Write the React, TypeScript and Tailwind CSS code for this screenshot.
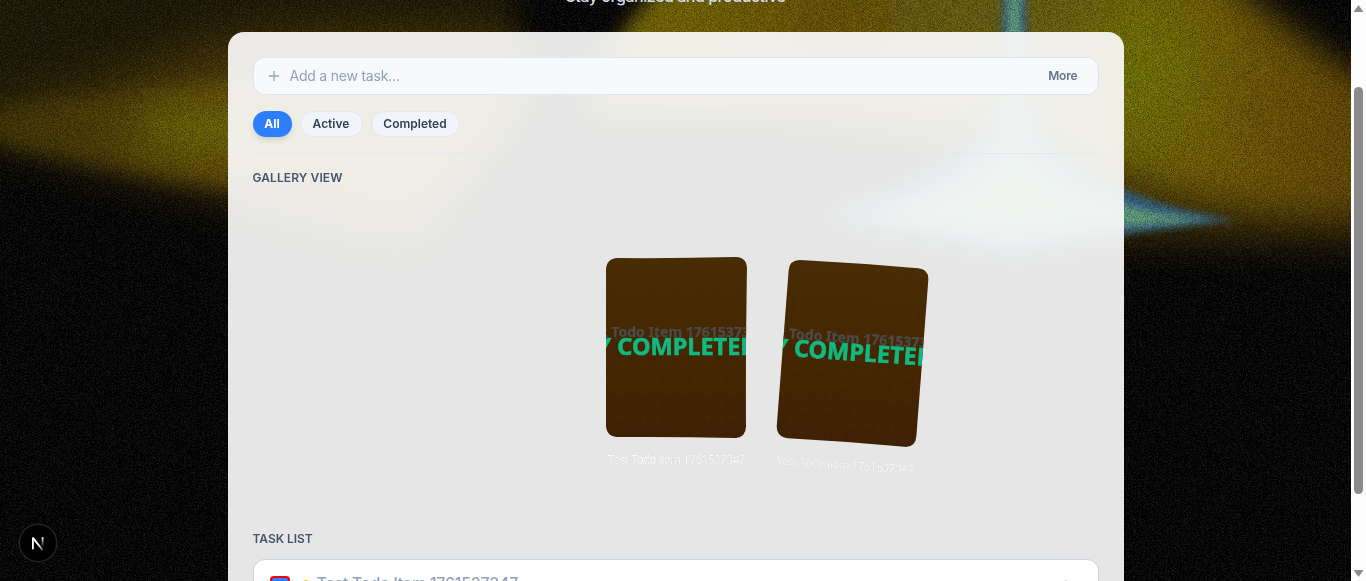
import { Plus } from "lucide-react";

function Backdrop() {
  return (
    <svg className="absolute inset-0" width="1351" height="581" viewBox="0 0 1351 581" aria-hidden="true">
      <defs>
        <filter id="b3" x="-30%" y="-30%" width="160%" height="160%"><feGaussianBlur stdDeviation="3.5" /></filter>
        <filter id="b9" x="-30%" y="-30%" width="160%" height="160%"><feGaussianBlur stdDeviation="9" /></filter>
        <filter id="b16" x="-30%" y="-30%" width="160%" height="160%"><feGaussianBlur stdDeviation="17" /></filter>
        <filter id="b20" x="-50%" y="-80%" width="200%" height="260%"><feGaussianBlur stdDeviation="20" /></filter>
        <filter id="b35" x="-50%" y="-80%" width="200%" height="260%"><feGaussianBlur stdDeviation="32" /></filter>
        <filter id="darkGrain" x="0" y="0" width="100%" height="100%" colorInterpolationFilters="sRGB">
          <feTurbulence type="fractalNoise" baseFrequency="1.37" numOctaves="1" seed="4" />
          <feColorMatrix values="0 0 0 0 0  0 0 0 0 0  0 0 0 0 0  1 0 0 0 -0.32" />
        </filter>
        <filter id="lightGrain" x="0" y="0" width="100%" height="100%" colorInterpolationFilters="sRGB">
          <feTurbulence type="fractalNoise" baseFrequency="1.43" numOctaves="1" seed="11" />
          <feColorMatrix values="0 0 0 0 1  0 0 0 0 1  0 0 0 0 1  0.3 0 0 0 -0.125" />
        </filter>
        <linearGradient id="leftGlow" x1="0" y1="0" x2="1" y2="0">
          <stop offset="0" stopColor="#3c3300" />
          <stop offset="0.45" stopColor="#684d00" />
          <stop offset="1" stopColor="#755c00" />
        </linearGradient>
        <linearGradient id="rightGlow" gradientUnits="userSpaceOnUse" x1="600" y1="0" x2="1351" y2="0">
          <stop offset="0" stopColor="#7c6c00" />
          <stop offset="0.12" stopColor="#7c6c00" />
          <stop offset="0.3" stopColor="#725700" />
          <stop offset="0.5" stopColor="#6d640f" />
          <stop offset="0.8" stopColor="#7c6300" />
          <stop offset="1" stopColor="#6c4c00" />
        </linearGradient>
      </defs>
      <rect width="1351" height="581" fill="#000" />
      <path d="M-60-30H530L500 100L330 180L-60 110Z" fill="#1a1700" filter="url(#b20)" />
      <path d="M-60 112Q80 85 210 40Q350 15 540 40L480 150L420 245Q310 225 215 198Q100 178 -60 130Z" fill="url(#leftGlow)" opacity="0.55" filter="url(#b20)" />
      <path d="M-60 112Q80 102 225 80Q350 55 530 85Q500 150 405 225Q300 208 215 185Q100 168 -60 132Z" fill="url(#leftGlow)" opacity="0.85" filter="url(#b9)" />
      <ellipse cx="225" cy="130" rx="90" ry="28" fill="#766a00" filter="url(#b20)" />
      <path d="M520-30H655L608 35L530 45Z" fill="#000" opacity="0.75" filter="url(#b9)" />
      <path d="M1080 130L1390 100V240H1080Z" fill="#3f2f00" filter="url(#b20)" />
      <path d="M596 65L680-40H1000V110H590Z" fill="url(#rightGlow)" filter="url(#b9)" />
      <path d="M700-60H1185Q1265 18 1410 110V208Q1240 220 1124 174Q950 130 700 90Z" fill="url(#rightGlow)" filter="url(#b16)" />
      <ellipse cx="1138" cy="72" rx="62" ry="75" fill="#7a8100" opacity="0.85" filter="url(#b35)" />
      <path d="M820 217Q950 185 998 115Q1002 70 1003-20H1025Q1026 70 1034 115Q1085 198 1236 220Q1100 235 1013 255Q930 236 820 217Z" fill="#35688c" filter="url(#b3)" />
      <path d="M850 218Q970 200 1004 145Q1008 80 1008-20H1020Q1020 80 1025 145Q1082 210 1212 220Q1090 228 1013 238Q930 228 850 218Z" fill="#68ab88" filter="url(#b3)" />
      <rect width="1351" height="581" filter="url(#darkGrain)" />
      <rect width="1351" height="581" filter="url(#lightGrain)" />
    </svg>
  );
}

const cards = [
  { id: "a", transform: "translate(676.5 347.5)", outline: "M-59-89.5Q0-89 59-90.5Q70-90.5 70.5-79Q69 0 69.5 79Q69 90.5 58 90.5Q0 89-59 89.5Q-70 89-70.5 78V-78Q-70-89-59-89.5Z" },
  { id: "b", transform: "translate(853 353.5) rotate(4)", outline: "M-59-89.5Q0-90.5 59-89.5Q70-89.5 70-78L69 78Q69 89.5 58 89.5Q0 88-59 89Q-70 89-71 78L-70-78Q-70-89-59-89.5Z" },
];

function Gallery() {
  return (
    <svg className="block h-[321px] w-[846px]" viewBox="253 193 846 321">
      <defs>
        <linearGradient id="cardFill" x1="0" y1="0" x2="0" y2="1">
          <stop offset="0" stopColor="#482c03" />
          <stop offset="0.45" stopColor="#452702" />
          <stop offset="1" stopColor="#3f2003" />
        </linearGradient>
        <pattern id="dots" width="12.7" height="13" patternUnits="userSpaceOnUse">
          <circle cx="6" cy="6" r="2.8" fill="#4b3511" opacity="0.14" />
        </pattern>
        {cards.map((c) => (
          <clipPath id={"clip-" + c.id} key={c.id}><path d={c.outline} /></clipPath>
        ))}
      </defs>
      {cards.map((c) => (
        <g key={c.id} transform={c.transform}>
          <path d={c.outline} fill="url(#cardFill)" />
          <path d={c.outline} fill="url(#dots)" />
          <g clipPath={"url(#clip-" + c.id + ")"} fontFamily="'Noto Sans', sans-serif" fontWeight="700">
            <text x="-97.5" y="-10.5" fontSize="14" fill="#4b4b4b" stroke="#4b4b4b" strokeWidth="0.25" textLength="187">Test Todo Item 1761537347</text>
            <text x="-80" y="7" fontSize="23.5" fill="#10b981" stroke="#10b981" strokeWidth="0.6" textLength="161">Y COMPLETED</text>
          </g>
          <text x="-69" y="116" fontSize="12" fill="#ffffff" stroke="#cfcfcf" strokeWidth="0.2" fontFamily="Roboto, sans-serif" textLength="138">Test Todo Item 1761537347</text>
        </g>
      ))}
    </svg>
  );
}

function Scrollbar() {
  return (
    <div className="flex h-full w-[15px] shrink-0 flex-col items-center bg-[#fcfcfc]">
      <svg width="15" height="87" viewBox="0 0 15 87"><path d="M7.5 5.7L11.6 11.5H3.4Z" fill="#8b8b8b" stroke="#8b8b8b" strokeLinejoin="round" /></svg>
      <div className="h-[407px] w-[9px] rounded-full bg-[#8b8b8b]" />
      <div className="grow" />
      <svg width="15" height="15" viewBox="0 0 15 15"><path d="M7.5 10.3L11.6 4.5H3.4Z" fill="#8b8b8b" stroke="#8b8b8b" strokeLinejoin="round" /></svg>
    </div>
  );
}

export default function App() {
  return (
    <div className="flex h-[581px] w-[1366px] overflow-hidden bg-black font-['Inter',sans-serif]">
      <div className="relative h-full w-[1351px] overflow-hidden">
        <Backdrop />
        <main className="relative flex flex-col items-center">
          <header className="flex h-8 items-start justify-center">
            <p className="-mt-4 text-base font-medium leading-6 tracking-[-0.46px] text-[#d3deea]">Stay organized and productive</p>
          </header>
          <section className="h-[640px] w-[896px] rounded-2xl bg-white/90 px-[25px] pt-[25px] backdrop-blur-md">
            <div className="flex h-[38px] w-[846px] items-center rounded-xl border border-[#dfe6f1] bg-[#f8fafc]/95 pl-[12px] pr-5">
              <Plus size={16} strokeWidth={2} className="text-[#9aa8bd]" />
              <span className="ml-2 grow text-sm tracking-[-0.22px] text-[#90a1b9]">Add a new task...</span>
              <span className="text-xs font-semibold tracking-[-0.15px] text-[#62748e]">More</span>
            </div>
            <div className="mt-4 flex h-[26px] gap-2 text-xs font-semibold text-[#314158]">
              <button className="flex w-[39px] items-center justify-center rounded-full bg-[#2b7fff] font-bold text-white shadow-md">All</button>
              <button className="flex w-[63px] items-center justify-center rounded-full border border-[#e2e8f0] bg-[#f1f5f9]">Active</button>
              <button className="flex w-[89px] items-center justify-center rounded-full border border-[#e2e8f0] bg-[#f1f5f9]">Completed</button>
            </div>
            <div className="mt-4 h-px bg-[#e2e8f0]" />
            <h2 className="mt-4 h-[23px] text-xs font-semibold leading-4 tracking-[0.1px] text-[#45556c]">GALLERY VIEW</h2>
            <Gallery />
            <div className="h-px bg-[#e2e8f0]" />
            <h2 className="mt-4 text-xs font-semibold leading-4 tracking-[-0.05px] text-[#45556c]">TASK LIST</h2>
            <div className="mt-3 flex h-[56px] items-start rounded-xl border border-[#cad5e2] bg-white px-4 pt-4">
              <div className="h-5 w-5 rounded border-2 border-[#fb0008] bg-[#2b7fff]" />
              <div className="ml-[13px] mt-1 h-[9px] w-[6px] rounded-full bg-[#fcbb00]" />
              <span className="ml-2 mt-[-5px] grow text-base font-medium leading-6 tracking-[-0.26px] text-[#90a1b9]">Test Todo Item 1761537347</span>
              <span className="mr-[14px] mt-[4px] h-3 w-1 rounded-full bg-[#cad5e2]" />
            </div>
          </section>
        </main>
        <div className="absolute left-5 top-[525px] flex h-9 w-9 items-center justify-center rounded-full bg-black ring-[1.5px] ring-[#232323]">
          <svg width="36" height="36" viewBox="0 0 36 36" fill="none">
            <defs>
              <linearGradient id="stem" x1="0" y1="12" x2="0" y2="22" gradientUnits="userSpaceOnUse"><stop stopColor="#fff" /><stop offset="1" stopColor="#fff" stopOpacity="0" /></linearGradient>
              <linearGradient id="diag" x1="19" y1="19" x2="24" y2="26" gradientUnits="userSpaceOnUse"><stop stopColor="#fff" /><stop offset="1" stopColor="#fff" stopOpacity="0.2" /></linearGradient>
            </defs>
            <path d="M12.9 24.2V12.4" stroke="#fff" strokeWidth="1.8" />
            <path d="M12.9 12.8L22.6 25" stroke="url(#diag)" strokeWidth="2" />
            <path d="M22.6 12.2V22" stroke="url(#stem)" strokeWidth="1.8" />
          </svg>
        </div>
      </div>
      <Scrollbar />
    </div>
  );
}
